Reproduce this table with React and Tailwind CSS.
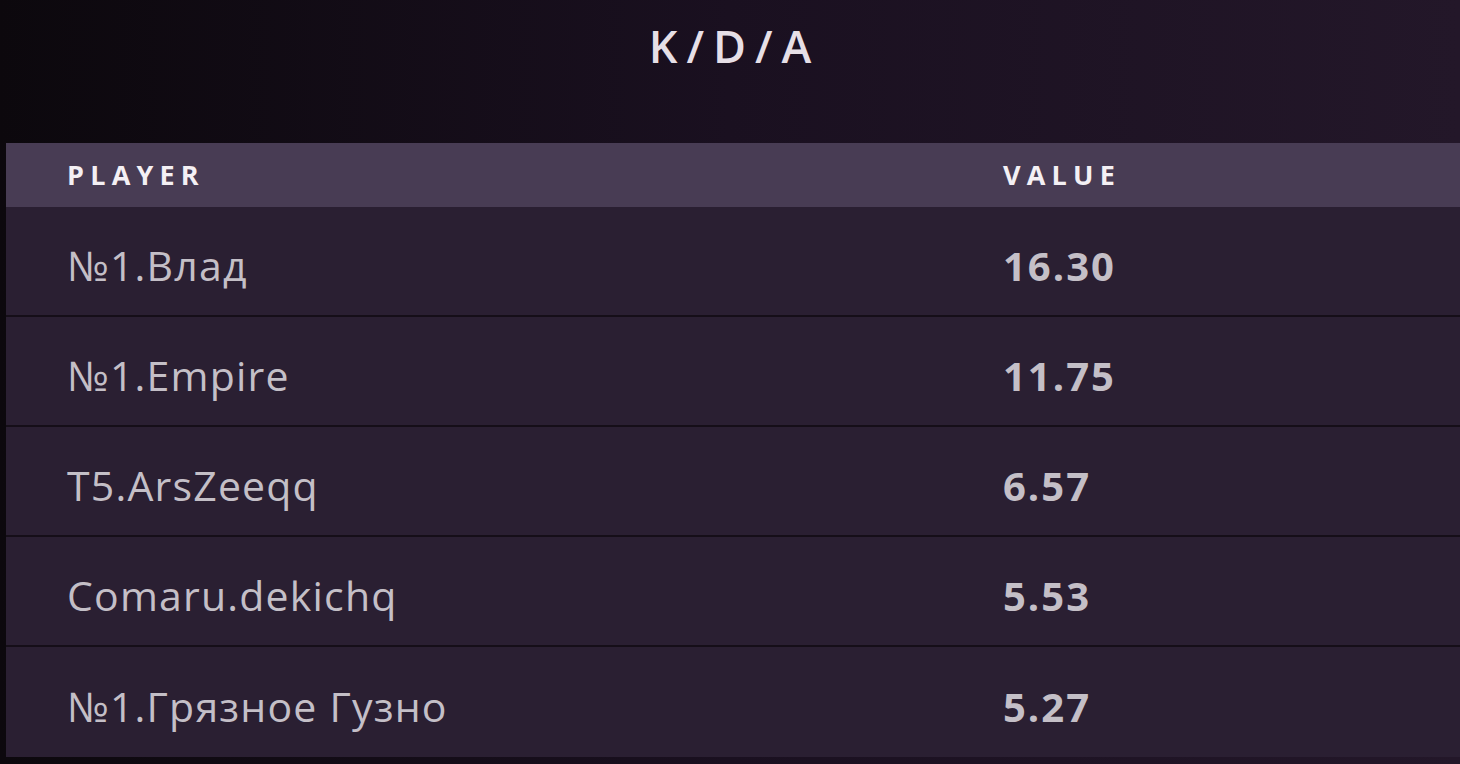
import React from "react";

const rows = [
  { player: "№1.Влад", value: "16.30" },
  { player: "№1.Empire", value: "11.75" },
  { player: "T5.ArsZeeqq", value: "6.57" },
  { player: "Comaru.dekichq", value: "5.53" },
  { player: "№1.Грязное Гузно", value: "5.27" },
];

export default function App() {
  return (
    <div className="w-[1460px] h-[764px] overflow-hidden bg-gradient-to-r from-[#0c080d] via-[#1a1020] to-[#231729] font-['Open_Sans',sans-serif]">
      <div className="h-[143px] flex justify-center pt-[20px]">
        <h1 className="text-[45px] leading-[52px] font-semibold tracking-[0.2em] text-[#e6dfe6] pl-[0.2em]">
          K/D/A
        </h1>
      </div>
      <div className="ml-[6px] bg-[#170f1b]">
        <div className="h-[64px] bg-[#483c54] flex items-center">
          <div className="w-[997px] pl-[61px] text-[27px] font-bold tracking-[0.23em] text-[#f4f0f4]">
            PLAYER
          </div>
          <div className="text-[27px] font-bold tracking-[0.23em] text-[#f4f0f4]">
            VALUE
          </div>
        </div>
        {rows.map((r, i) => (
          <div
            key={r.player}
            className={`h-[110px] pt-[10px] bg-[#2a1f32] flex items-center ${i < rows.length - 1 ? "border-b-2 border-[#150e18]" : ""}`}
          >
            <div className="w-[997px] pl-[61px] text-[41px] tracking-[1.2px] text-[#c4bfc7]">
              {r.player}
            </div>
            <div className="text-[40px] font-bold tracking-[2px] text-[#c4bfc7]">
              {r.value}
            </div>
          </div>
        ))}
      </div>
    </div>
  );
}
